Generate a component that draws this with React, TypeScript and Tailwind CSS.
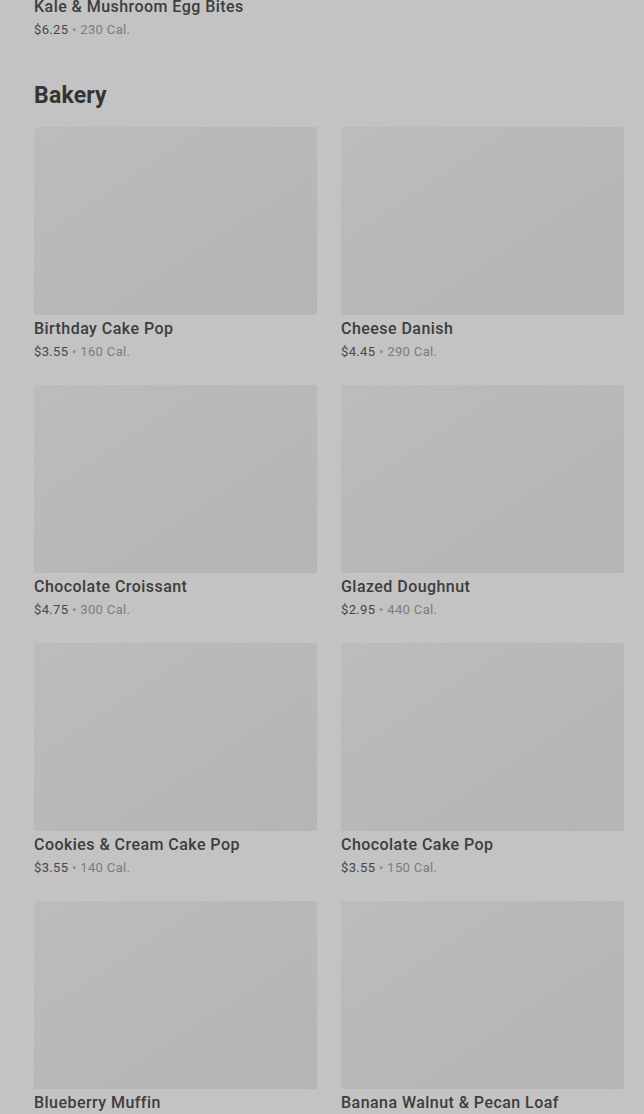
const items = [
  { name: 'Birthday Cake Pop', price: '$3.55', cal: '160 Cal.' },
  { name: 'Cheese Danish', price: '$4.45', cal: '290 Cal.' },
  { name: 'Chocolate Croissant', price: '$4.75', cal: '300 Cal.' },
  { name: 'Glazed Doughnut', price: '$2.95', cal: '440 Cal.' },
  { name: 'Cookies & Cream Cake Pop', price: '$3.55', cal: '140 Cal.' },
  { name: 'Chocolate Cake Pop', price: '$3.55', cal: '150 Cal.' },
  { name: 'Blueberry Muffin', price: '$3.25', cal: '360 Cal.' },
  { name: 'Banana Walnut & Pecan Loaf', price: '$3.65', cal: '410 Cal.' }
]

function PriceLine({ price, cal }: { price: string; cal: string }) {
  return (
    <p className="text-[13px] leading-[18px] tracking-[0.35px] text-[#474747]">
      {price} <span className="text-[#8a8a8a]">•</span> <span className="text-[#7c7c7c]">{cal}</span>
    </p>
  )
}

function ItemCard({ name, price, cal }: { name: string; price: string; cal: string }) {
  return (
    <div>
      <div className="h-[188px] rounded-[2px] bg-gradient-to-br from-[#bcbcbc] via-[#b8b8b8] to-[#b5b5b5]" />
      <h3 className="mt-[3px] text-[16px] leading-[22px] tracking-[0.45px] font-medium text-[#3d3d3d]">{name}</h3>
      <div className="mt-[3px]">
        <PriceLine price={price} cal={cal} />
      </div>
    </div>
  )
}

export default function App() {
  return (
    <div
      className="h-[1114px] overflow-hidden bg-[#c3c3c3] pl-[34px] pr-[20px]"
      style={{ fontFamily: 'Roboto, "Noto Sans", Arial, sans-serif' }}
    >
      {/* previous section tail */}
      <div className="-mt-[4px]">
        <h3 className="text-[16px] leading-[22px] tracking-[0.45px] font-medium text-[#3d3d3d]">
          Kale &amp; Mushroom Egg Bites
        </h3>
        <div className="mt-[3px]">
          <PriceLine price="$6.25" cal="230 Cal." />
        </div>
      </div>

      <h2 className="mt-[43px] mb-[17px] text-[23px] leading-[28px] tracking-[0.2px] font-bold text-[#343434]">
        Bakery
      </h2>

      <div className="grid grid-cols-2 gap-x-[24px] gap-y-[24px]">
        {items.map((it) => (
          <ItemCard key={it.name} {...it} />
        ))}
      </div>
    </div>
  )
}
